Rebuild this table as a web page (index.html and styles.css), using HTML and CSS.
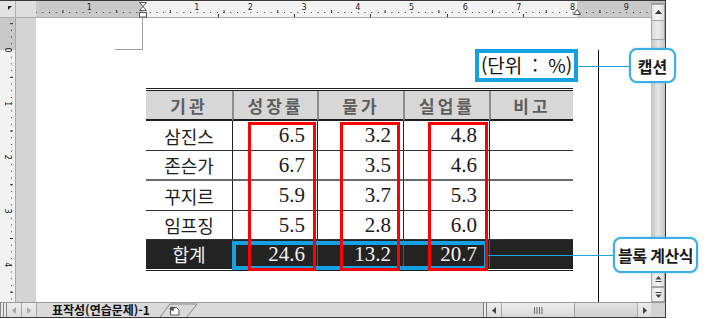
FILE: index.html
```html
<!DOCTYPE html>
<html lang="ko">
<head>
<meta charset="utf-8">
<title>표작성</title>
<link rel="stylesheet" href="styles.css">
</head>
<body>
<div class="stage">
  <div class="window">
    <div class="corner">
      <svg width="16" height="17" viewBox="0 0 16 17"><polygon points="8,5 12,5 8,9" fill="#222"/></svg>
    </div>
    <div class="gutter-top"></div>
    <div class="hruler">
      <svg width="615" height="17" viewBox="0 0 615 17">
        <defs>
          <pattern id="hdots" x="107" y="0" width="6.7125" height="17" patternUnits="userSpaceOnUse">
            <rect x="0" y="11" width="1" height="1" fill="#333"/>
          </pattern>
          <pattern id="hhalf" x="133.85" y="0" width="53.7" height="17" patternUnits="userSpaceOnUse">
            <rect x="0" y="9" width="1" height="3" fill="#333"/>
          </pattern>
        </defs>
        <rect x="0" y="0" width="615" height="17" fill="#f2f2f2"/>
        <rect x="0" y="0" width="107" height="17" fill="#c9c9c9"/>
        <rect x="541" y="0" width="74" height="17" fill="#c9c9c9"/>
        <rect x="0" y="0" width="615" height="17" fill="url(#hdots)"/>
        <rect x="0" y="0" width="615" height="17" fill="url(#hhalf)"/>
        <rect x="0" y="16" width="615" height="1" fill="#a9a9a9"/>
        <g class="rnum">
          <text x="53.3" y="9">1</text>
          <text x="160.7" y="9">1</text>
          <text x="214.4" y="9">2</text>
          <text x="268.1" y="9">3</text>
          <text x="321.8" y="9">4</text>
          <text x="375.5" y="9">5</text>
          <text x="429.2" y="9">6</text>
          <text x="482.9" y="9">7</text>
          <text x="536.6" y="9">8</text>
          <text x="590.3" y="9">9</text>
        </g>
        <g fill="#333">
          <rect x="182" y="13" width="1" height="3"/>
          <rect x="258" y="13" width="1" height="3"/>
          <rect x="334" y="13" width="1" height="3"/>
          <rect x="411" y="13" width="1" height="3"/>
          <rect x="487" y="13" width="1" height="3"/>
        </g>
        <g fill="#fff" stroke="#555" stroke-width="1">
          <polygon points="103.5,1.5 110.5,1.5 107,5.5"/>
          <polygon points="103.5,9.5 110.5,9.5 107,5.5"/>
          <rect x="103.5" y="11.5" width="7" height="4.5"/>
          <polygon points="537.5,13.5 544.5,13.5 541,8.5"/>
        </g>
      </svg>
    </div>
    <div class="vscroll">
      <div class="cap"></div>
      <div class="sbtn up"><svg width="7" height="5" viewBox="0 0 7 5"><polygon points="0,4 7,4 3.5,0" fill="#333"/></svg></div>
      <div class="vthumb"></div>
      <div class="vtrack"></div>
      <div class="sbtn"><svg width="7" height="5" viewBox="0 0 7 5"><polygon points="0,0 7,0 3.5,4" fill="#333"/></svg></div>
      <div class="sbtn"><svg width="7" height="7" viewBox="0 0 7 7"><polygon points="0.5,3.5 6.5,3.5 3.5,0" fill="#444"/><rect x="0.5" y="5" width="6" height="1" fill="#444"/></svg></div>
      <div class="sbtn"><svg width="7" height="7" viewBox="0 0 7 7"><rect x="0.5" y="1" width="6" height="1" fill="#444"/><polygon points="0.5,3.5 6.5,3.5 3.5,7" fill="#444"/></svg></div>
    </div>
    <div class="vruler">
      <svg width="16" height="284" viewBox="0 0 16 284">
        <defs>
          <pattern id="vdots" x="0" y="32" width="16" height="6.7125" patternUnits="userSpaceOnUse">
            <rect x="11" y="0" width="1" height="1" fill="#333"/>
          </pattern>
          <pattern id="vhalf" x="0" y="58.85" width="16" height="53.7" patternUnits="userSpaceOnUse">
            <rect x="10" y="0" width="3" height="1" fill="#333"/>
          </pattern>
        </defs>
        <rect x="0" y="0" width="16" height="284" fill="#f2f2f2"/>
        <rect x="0" y="0" width="16" height="32" fill="#c9c9c9"/>
        <rect x="0" y="0" width="16" height="284" fill="url(#vdots)"/>
        <rect x="0" y="0" width="16" height="284" fill="url(#vhalf)"/>
        <rect x="15" y="0" width="1" height="284" fill="#a9a9a9"/>
        <g class="rnum">
          <text x="7" y="32" transform="rotate(90 7 32)">0</text>
          <text x="7" y="85.7" transform="rotate(90 7 85.7)">1</text>
          <text x="7" y="139.4" transform="rotate(90 7 139.4)">2</text>
          <text x="7" y="193.1" transform="rotate(90 7 193.1)">3</text>
          <text x="7" y="246.8" transform="rotate(90 7 246.8)">4</text>
        </g>
      </svg>
    </div>
    <div class="gutter"></div>
    <div class="doc">
      <div class="crop"></div>
      <div class="content">
        <div class="unit">(단위 : %)</div>
        <div class="tblwrap">
          <div class="tbl">
            <div class="c h first">기관</div>
            <div class="c h">성장률</div>
            <div class="c h">물가</div>
            <div class="c h">실업률</div>
            <div class="c h">비고</div>

            <div class="c k first">삼진스</div>
            <div class="c n">6.5</div>
            <div class="c n">3.2</div>
            <div class="c n">4.8</div>
            <div class="c n"></div>

            <div class="c k first gl">존슨가</div>
            <div class="c n gl">6.7</div>
            <div class="c n gl">3.5</div>
            <div class="c n gl">4.6</div>
            <div class="c n gl"></div>

            <div class="c k first">꾸지르</div>
            <div class="c n">5.9</div>
            <div class="c n">3.7</div>
            <div class="c n">5.3</div>
            <div class="c n"></div>

            <div class="c k first">임프징</div>
            <div class="c n">5.5</div>
            <div class="c n">2.8</div>
            <div class="c n">6.0</div>
            <div class="c n"></div>

            <div class="c k t first">합계</div>
            <div class="c n t">24.6</div>
            <div class="c n t">13.2</div>
            <div class="c n t">20.7</div>
            <div class="c n t"></div>
          </div>
          <div class="bluebox"></div>
          <div class="redbox r1"></div>
          <div class="redbox r2"></div>
          <div class="redbox r3"></div>
        </div>
      </div>
      <div class="margin-line"></div>
    </div>
    <div class="hbar">
      <div class="split"></div>
      <div class="hbtn"><svg width="4" height="7" viewBox="0 0 4 7"><polygon points="4,0 4,7 0,3.5" fill="#aaa"/></svg></div>
      <div class="hbtn"><svg width="4" height="7" viewBox="0 0 4 7"><polygon points="0,0 0,7 4,3.5" fill="#aaa"/></svg></div>
      <div class="tabgap"></div>
      <div class="tab">표작성(연습문제)-1</div>
      <div class="newtab">
        <svg width="37" height="15" viewBox="0 0 37 15">
          <polyline points="0,15 10,2 37,2" fill="none" stroke="#888" stroke-width="1"/>
          <line x1="27" y1="15" x2="37" y2="2" stroke="#888" stroke-width="1"/>
          <path d="M10.5 5.5 h6 l2.5 2.5 v5 h-8.5 z" fill="#fff" stroke="#555" stroke-width="1"/>
          <polygon points="12,4 13,6 15,6.3 13.5,7.5 14,9.5 12,8.3 10,9.5 10.5,7.5 9,6.3 11,6" fill="#555"/>
        </svg>
      </div>
      <div class="hfill"></div>
      <div class="split2"></div>
      <div class="hbtn"><svg width="4" height="7" viewBox="0 0 4 7"><polygon points="4,0 4,7 0,3.5" fill="#444"/></svg></div>
      <div class="hthumb"><svg width="9" height="7" viewBox="0 0 9 7"><g fill="#666"><rect x="0" y="0" width="1" height="7"/><rect x="2.5" y="0" width="1" height="7"/><rect x="5" y="0" width="1" height="7"/><rect x="7.5" y="0" width="1" height="7"/></g></svg></div>
      <div class="htrack"></div>
      <div class="hbtn last"><svg width="4" height="7" viewBox="0 0 4 7"><polygon points="0,0 0,7 4,3.5" fill="#444"/></svg></div>
    </div>
    <div class="sizer"></div>
  </div>

  <div class="lead l1"></div>
  <div class="lead l2"></div>
  <div class="callout c1">캡션</div>
  <div class="callout c2">블록 계산식</div>
</div>
</body>
</html>
```

FILE: styles.css
```css
html, body {
  margin: 0;
  padding: 0;
  background: #fff;
}

body {
  font-family: "Noto Sans CJK KR", "Noto Sans", sans-serif;
  color: #1a1a1a;
}

.stage {
  position: relative;
  width: 710px;
  height: 319px;
  overflow: hidden;
  background: #fff;
}

.window {
  width: 666px;
  height: 318px;
  box-sizing: border-box;
  border-top: 1px solid #3a3a3a;
  border-right: 1px solid #3a3a3a;
  border-bottom: 1px solid #3a3a3a;
  display: grid;
  grid-template-columns: 16px 20px 615px 14px;
  grid-template-rows: 17px 284px 15px;
  background: #d6d6d6;
}

.corner {
  grid-column: 1;
  grid-row: 1;
  background: #e2e2e2;
  box-sizing: border-box;
  border-right: 1px solid #b0b0b0;
  border-bottom: 1px solid #b0b0b0;
}

.corner svg { display: block; }

.gutter-top {
  grid-column: 2;
  grid-row: 1;
  background: #dedede;
  border-bottom: 1px solid #a9a9a9;
  box-sizing: border-box;
}

.hruler {
  grid-column: 3;
  grid-row: 1;
}

.hruler svg, .vruler svg { display: block; }

.rnum text {
  font-family: "DejaVu Sans", sans-serif;
  font-size: 8px;
  fill: #222;
  text-anchor: middle;
}

.vruler .rnum text {
  dominant-baseline: central;
}

.vscroll {
  grid-column: 4;
  grid-row: 1 / 3;
  display: flex;
  flex-direction: column;
  background: #cfcfcf;
}

.cap {
  height: 3px;
  background: #bcbcbc;
  border-bottom: 1px solid #999;
  box-sizing: border-box;
}

.sbtn {
  flex: none;
  height: 15px;
  box-sizing: border-box;
  border: 1px solid #a5a5a5;
  background: linear-gradient(to right, #e4e4e4, #f5f5f5 50%, #dcdcdc);
  display: flex;
  align-items: center;
  justify-content: center;
}

.sbtn.up { height: 17px; }

.sbtn svg { display: block; }

.vthumb {
  flex: none;
  height: 19px;
  box-sizing: border-box;
  border: 1px solid #a5a5a5;
  border-top: none;
  background: linear-gradient(to right, #dadada, #ececec 50%, #d2d2d2);
}

.vtrack {
  flex: 1;
  background: linear-gradient(to right, #c2c2c2, #e6e6e6 50%, #c6c6c6);
}

.vruler {
  grid-column: 1;
  grid-row: 2;
}

.gutter {
  grid-column: 2;
  grid-row: 2;
  background: #d4d4d4;
}

.doc {
  grid-column: 3;
  grid-row: 2;
  background: #fff;
  display: grid;
  grid-template-columns: 107px 455px 1fr;
  grid-template-rows: 32px 1fr;
}

.crop {
  grid-column: 1;
  grid-row: 1;
  justify-self: end;
  width: 28px;
  height: 32px;
  box-sizing: border-box;
  border-right: 1px solid #9c9c9c;
  border-bottom: 1px solid #9c9c9c;
}

.margin-line {
  grid-column: 3;
  grid-row: 2;
  border-left: 1px solid #111;
}

.content {
  grid-column: 2;
  grid-row: 2;
  display: flex;
  flex-direction: column;
  align-items: flex-start;
}

.unit {
  align-self: flex-end;
  margin-right: 20px;
  margin-top: -1px;
  width: 103px;
  height: 33px;
  box-sizing: border-box;
  border: 4px solid #12a1e2;
  font-size: 19px;
  line-height: 24px;
  word-spacing: 5px;
  text-align: center;
  white-space: nowrap;
  color: #111;
}

.tblwrap {
  position: relative;
  margin-top: 6px;
  margin-left: 3px;
}

.tbl {
  display: grid;
  grid-template-columns: 86px 85px 86px 86px 84px;
  grid-template-rows: 30px 30px 30px 30px 29px 28px;
  border-top: 3px double #1e1e1e;
  border-bottom: 3px double #1e1e1e;
}

.c {
  box-sizing: border-box;
  display: flex;
  align-items: center;
  border-left: 1px solid #222;
  border-bottom: 1px solid #333;
}

.c.first { border-left: none; }

.c.gl { border-bottom: 2px solid #6a6a6a; }

.h {
  background: #d7d7d7;
  border-left: 2px solid #8c8c8c;
  border-bottom: 2px solid #1e1e1e;
  justify-content: center;
  font-weight: 700;
  font-size: 17px;
  letter-spacing: 3px;
  color: #5e5e5e;
}

.h.first { border-left: none; }

.k {
  justify-content: center;
  font-size: 18px;
  color: #1e1e1e;
}

.n {
  justify-content: flex-end;
  padding-right: 12px;
  font-family: "Liberation Serif", serif;
  font-size: 21px;
  color: #1a1a1a;
}

.t {
  background: #232323;
  color: #f2f2f2;
  border-bottom: none;
  border-left: 1px solid #555;
}

.t.first { border-left: none; }

.bluebox {
  position: absolute;
  left: 86px;
  top: 153px;
  width: 256px;
  height: 29px;
  box-sizing: border-box;
  border: 4px solid #12a1e2;
}

.redbox {
  position: absolute;
  top: 34px;
  height: 149px;
  box-sizing: border-box;
  border: 3px solid #ff0000;
}

.r1 { left: 102px; width: 68px; }
.r2 { left: 194px; width: 60px; }
.r3 { left: 282px; width: 60px; }

.hbar {
  grid-column: 1 / 4;
  grid-row: 3;
  display: flex;
  background: #dadada;
  border-top: 1px solid #9a9a9a;
  box-sizing: border-box;
}

.split {
  width: 7px;
  flex: none;
  box-sizing: border-box;
  border-left: 1px solid #888;
  border-right: 1px solid #888;
  background: linear-gradient(to right, #e8e8e8 0 2px, #888 2px 3px, #e8e8e8 3px);
}

.hbtn {
  width: 15px;
  flex: none;
  box-sizing: border-box;
  border-right: 1px solid #a8a8a8;
  background: linear-gradient(to bottom, #ededed, #dcdcdc);
  display: flex;
  align-items: center;
  justify-content: center;
}

.hbtn.last {
  width: 14px;
  border-left: 1px solid #a8a8a8;
  border-right: none;
}

.hbtn svg { display: block; }

.tabgap {
  width: 15px;
  flex: none;
}

.tab {
  width: 100px;
  flex: none;
  font-weight: 700;
  font-size: 12px;
  line-height: 14px;
  white-space: nowrap;
  color: #111;
  margin-right: 8px;
}

.newtab {
  width: 37px;
  flex: none;
}

.newtab svg { display: block; margin-top: -1px; }

.hfill {
  flex: 1;
}

.split2 {
  width: 4px;
  flex: none;
  box-sizing: border-box;
  border-left: 1px solid #777;
  border-right: 1px solid #777;
  background: #f0f0f0;
}

.hthumb {
  width: 73px;
  flex: none;
  box-sizing: border-box;
  border-right: 1px solid #a0a0a0;
  background: linear-gradient(to bottom, #eeeeee, #d8d8d8);
  display: flex;
  align-items: center;
  justify-content: center;
}

.hthumb svg { display: block; }

.htrack {
  width: 62px;
  flex: none;
  background: linear-gradient(to bottom, #e2e2e2, #cfcfcf);
}

.sizer {
  grid-column: 4;
  grid-row: 3;
  background: #d2d2d2;
  border-top: 1px solid #9a9a9a;
  box-sizing: border-box;
}

.lead {
  position: absolute;
  height: 1px;
  background: #1aa3e0;
}

.l1 { left: 578px; top: 66px; width: 51px; }
.l2 { left: 488px; top: 255px; width: 125px; }

.callout {
  position: absolute;
  box-sizing: border-box;
  background: #fff;
  border: 2px solid #3aaee8;
  border-radius: 8px;
  box-shadow: 0 0 2px rgba(58, 174, 232, 0.6);
  display: flex;
  align-items: center;
  justify-content: center;
  font-weight: 700;
  font-size: 16px;
  color: #1a1a1a;
  white-space: nowrap;
}

.c1 { left: 629px; top: 48px; width: 47px; height: 35px; }
.c2 { left: 613px; top: 237px; width: 85px; height: 36px; letter-spacing: -0.5px; }
```
